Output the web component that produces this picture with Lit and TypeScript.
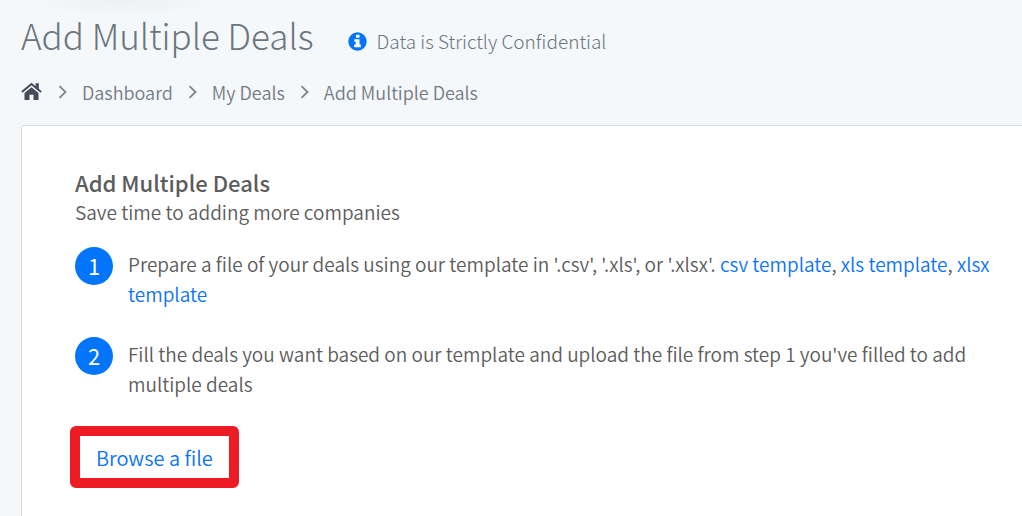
import { LitElement, html, css } from "lit";
import { customElement } from "lit/decorators.js";

const crumbs = ["Dashboard", "My Deals", "Add Multiple Deals"];

@customElement("app-root")
export class AppRoot extends LitElement {
  static styles = css`
    :host {
      display: flex;
      flex-direction: column;
      box-sizing: border-box;
      min-height: 100vh;
      padding-left: 21px;
      overflow: hidden;
      background: radial-gradient(ellipse 90px 16px at 122px 0, #eef1f4, #f0f4f7 60%, #f4f8fb) no-repeat #f4f8fb;
      font-family: "Noto Sans CJK SC", "Noto Sans", sans-serif;
      font-size: 19px;
      font-weight: 350;
      line-height: 30px;
      color: #5c5c5c;
    }
    h1, h2, p, ol { margin: 0; padding: 0; }
    a { color: #0b73f8; text-decoration: none; }
    .head {
      display: flex;
      align-items: center;
      gap: 34px;
      padding-top: 6px;
      color: #6c757d;
    }
    .head h1 { font-size: 35px; line-height: 58px; font-weight: 300; }
    .note {
      display: flex;
      align-items: center;
      gap: 10px;
      padding-top: 12px;
      font-weight: 300;
    }
    svg { display: block; flex: none; }
    .crumbs {
      display: flex;
      align-items: center;
      gap: 15px;
      padding-top: 13px;
      font-size: 18px;
    }
    .crumbs a { color: #747b84; }
    .card {
      flex: 1;
      margin-top: 18px;
      padding: 41px 24px 28px 53px;
      border: 1px solid #d9dcdf;
      border-right: 0;
      border-bottom: 0;
      border-top-left-radius: 4px;
      background: #fff;
    }
    .card h2 { font-size: 22px; font-weight: 500; }
    .steps {
      display: grid;
      gap: 30px;
      margin-top: 22px;
      list-style: none;
    }
    .steps li { display: flex; align-items: flex-start; gap: 15px; }
    .num {
      flex: none;
      width: 38px;
      margin-top: -2px;
      padding-bottom: 2px;
      border-radius: 50%;
      background: #0275fb;
      color: #fff;
      font-size: 22px;
      font-weight: 400;
      line-height: 36px;
      text-align: center;
    }
    .browse {
      margin: 27px 0 0 -5px;
      padding: 7px 16px 5px;
      border: 10px solid #ed1c24;
      border-radius: 6px;
      background: none;
      color: #0b73f8;
      font: inherit;
      font-size: 20px;
      line-height: 30px;
    }
  `;

  render() {
    return html`
      <header class="head">
        <h1>Add Multiple Deals</h1>
        <p class="note">
          <svg width="19" height="19" viewBox="0 0 19 19" aria-hidden="true">
            <circle cx="9.5" cy="9.5" r="9.2" fill="#0275fb" />
            <path d="M8 2.800h3.500v3H8zM6.300 7.200h5.200v5.400h1.300v2.600H6.200v-2.600h1.500V9.700H6.300z" fill="#fff" />
          </svg>
          <span>Data is Strictly Confidential</span>
        </p>
      </header>
      <nav class="crumbs" aria-label="Breadcrumb">
        <a href="#" aria-label="Home">
          <svg width="22" height="20" viewBox="0 0 22 20">
            <path d="M10.500 5.200l7 5.800V17.500q0 .5-.5.500H12.500v-5.200H8.500v5.200H4q-.5 0-.5-.5V11z" fill="#454b58" />
            <path d="M.900 10L10.500 2 20.100 10" fill="none" stroke="#454b58" stroke-width="2" />
            <path d="M14.600 1.200h3.200v6.300l-3.200-2.700z" fill="#454b58" />
          </svg>
        </a>
        ${crumbs.map(
          (name) => html`
            <svg width="9" height="14" viewBox="0 0 9 14" aria-hidden="true">
              <path d="M1.500 1.200L7.500 7l-6 5.800" fill="none" stroke="#7d848c" stroke-width="1.800" />
            </svg>
            <a href="#">${name}</a>
          `
        )}
      </nav>
      <main class="card">
        <h2>Add Multiple Deals</h2>
        <p>Save time to adding more companies</p>
        <ol class="steps">
          <li>
            <span class="num">1</span>
            <p>
              Prepare a file of your deals using our template in '.csv', '.xls', or '.xlsx'.
              <a href="#">csv template</a>, <a href="#">xls template</a>, <a href="#">xlsx template</a>
            </p>
          </li>
          <li>
            <span class="num">2</span>
            <p>Fill the deals you want based on our template and upload the file from step 1 you've filled to add multiple deals</p>
          </li>
        </ol>
        <button class="browse" type="button">Browse a file</button>
      </main>
    `;
  }
}
